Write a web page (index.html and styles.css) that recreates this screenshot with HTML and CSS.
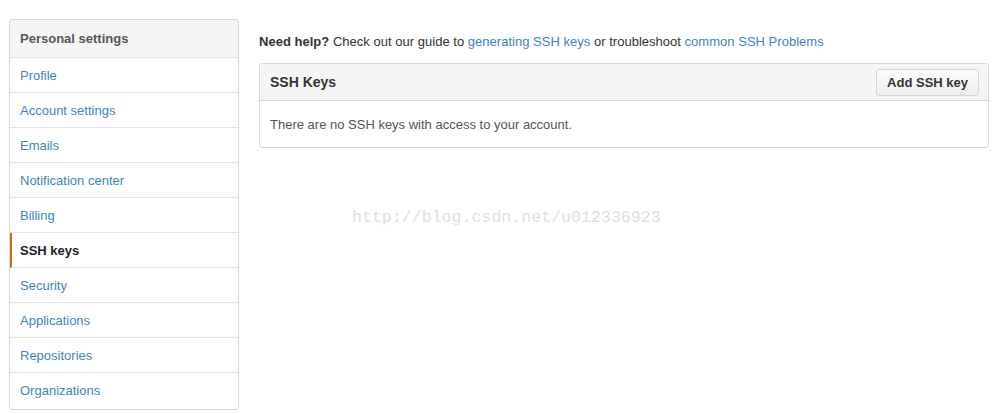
FILE: index.html
```html
<!DOCTYPE html>
<html>
<head>
<meta charset="utf-8">
<link rel="stylesheet" href="styles.css">
</head>
<body>
<div class="page">
  <nav class="menu">
    <div class="menu-heading">Personal settings</div>
    <a class="menu-item" href="#">Profile</a>
    <a class="menu-item" href="#">Account settings</a>
    <a class="menu-item" href="#">Emails</a>
    <a class="menu-item" href="#">Notification center</a>
    <a class="menu-item" href="#">Billing</a>
    <a class="menu-item selected" href="#">SSH keys</a>
    <a class="menu-item" href="#">Security</a>
    <a class="menu-item" href="#">Applications</a>
    <a class="menu-item" href="#">Repositories</a>
    <a class="menu-item" href="#">Organizations</a>
  </nav>
  <main class="content">
    <p class="help"><strong>Need help?</strong> Check out our guide to <a href="#">generating SSH keys</a> or troubleshoot <a href="#">common SSH Problems</a></p>
    <div class="box">
      <div class="box-header">
        <h3 class="box-title">SSH Keys</h3>
        <button class="btn">Add SSH key</button>
      </div>
      <div class="box-body">There are no SSH keys with access to your account.</div>
    </div>
    <div class="watermark">http://blog.csdn.net/u012336923</div>
  </main>
</div>
</body>
</html>
```
FILE: styles.css
```css
* { box-sizing: border-box; }
html, body { margin: 0; padding: 0; background: #fff; }
body {
  font-family: "Liberation Sans", Helvetica, Arial, sans-serif;
  font-size: 13px;
  color: #333;
}
.page {
  display: flex;
  align-items: flex-start;
  padding: 19px 5px 0 9px;
}
.menu {
  width: 230px;
  flex: none;
  border: 1px solid #d8d8d8;
  border-radius: 3px;
  display: flex;
  flex-direction: column;
}
.menu-heading {
  height: 38px;
  line-height: 37px;
  padding-left: 10px;
  background: #f5f5f5;
  font-weight: bold;
  font-size: 13px;
  color: #555;
  border-bottom: 1px solid #e5e5e5;
  border-radius: 3px 3px 0 0;
}
.menu-item {
  height: 35px;
  line-height: 35px;
  padding-left: 10px;
  color: #4183c4;
  text-decoration: none;
  border-bottom: 1px solid #e5e5e5;
}
.menu-item:last-child { border-bottom: none; height: 36px; }
.menu-item.selected {
  color: #222;
  font-weight: bold;
  border-left: 2px solid #d26911;
  padding-left: 8px;
}
.content {
  flex: 1;
  margin-left: 20px;
  display: flex;
  flex-direction: column;
}
.help {
  margin: 14px 0 0 0;
  line-height: 17px;
  letter-spacing: 0.02px;
}
.help a { color: #4183c4; text-decoration: none; }
.box {
  margin-top: 13px;
  border: 1px solid #d8d8d8;
  border-radius: 3px;
}
.box-header {
  height: 37px;
  background: #f5f5f5;
  border-bottom: 1px solid #d8d8d8;
  display: flex;
  align-items: center;
  justify-content: space-between;
  padding: 0 9px 0 10px;
}
.box-title {
  margin: 0;
  font-size: 14px;
  font-weight: bold;
  color: #333;
}
.btn {
  font-family: inherit;
  font-size: 13px;
  font-weight: bold;
  color: #333;
  height: 27px;
  padding: 0 10px;
  background: linear-gradient(#fcfcfc, #eeeeee);
  border: 1px solid #d5d5d5;
  border-radius: 3px;
}
.box-body {
  padding: 16px 10px 15px;
  line-height: 15px;
  color: #555;
}
.watermark {
  margin: 60px 0 0 93px;
  font-family: "Liberation Mono", monospace;
  font-size: 16.6px;
  color: #e0e0e0;
}
```
